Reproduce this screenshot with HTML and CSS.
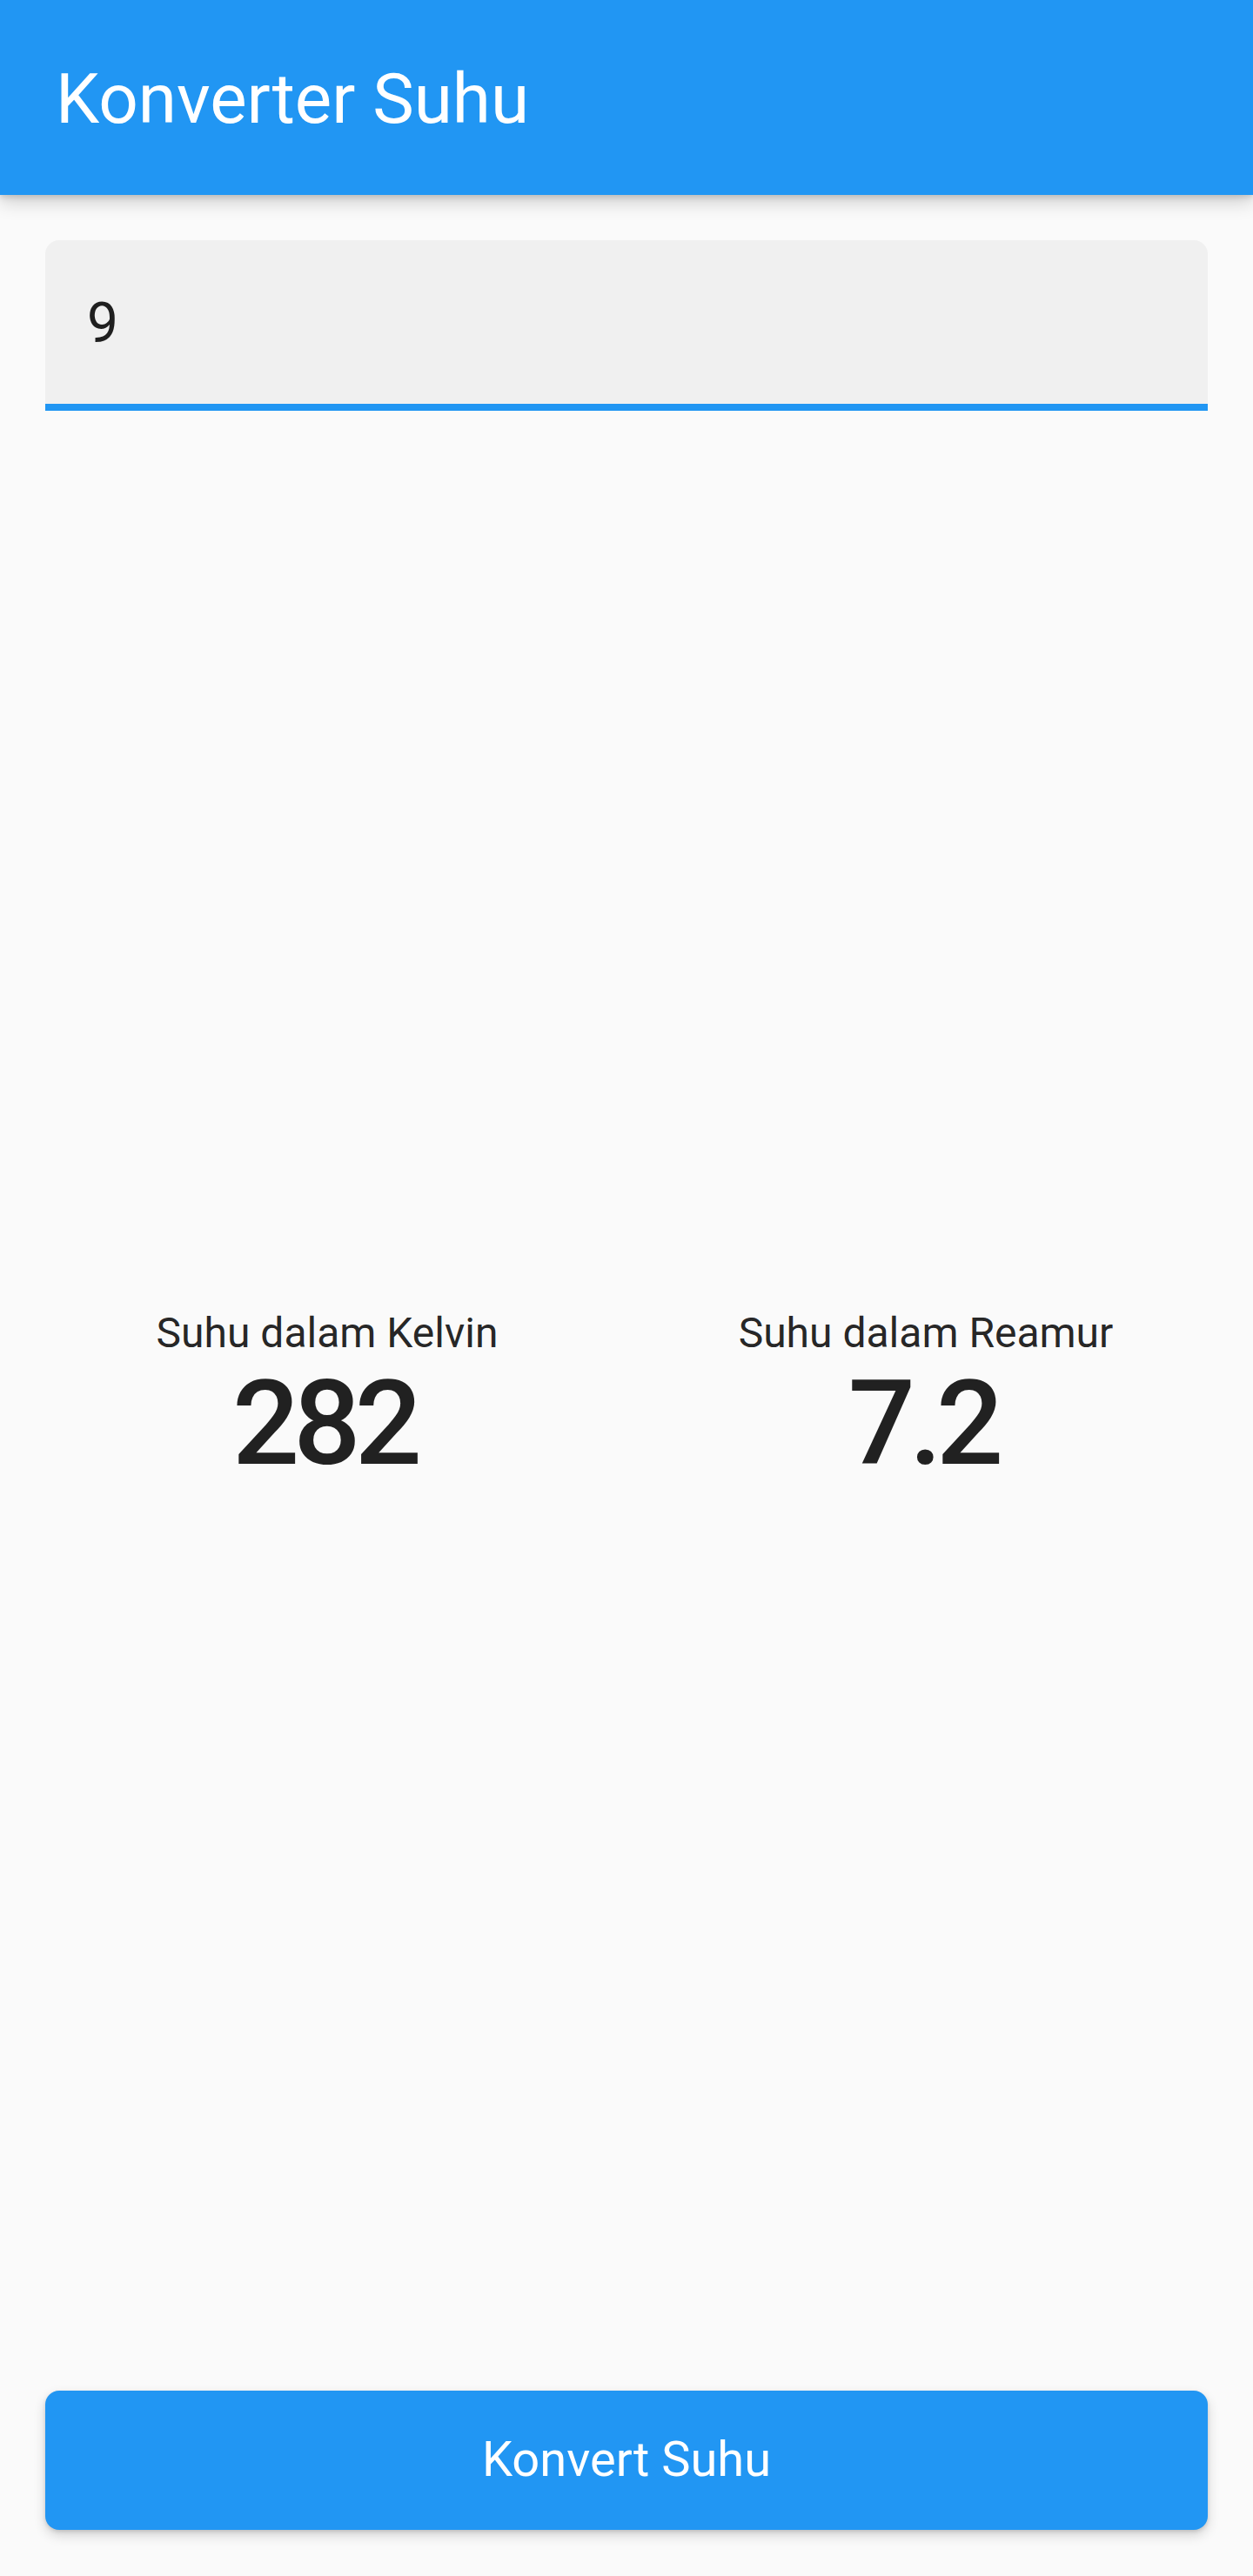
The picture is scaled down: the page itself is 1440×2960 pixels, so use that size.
FILE: index.html
```html
<!DOCTYPE html>
<html lang="id">
<head>
<meta charset="utf-8">
<title>Konverter Suhu</title>
<link rel="stylesheet" href="styles.css">
</head>
<body>
<div class="app">
  <header class="appbar">
    <h1 class="appbar-title">Konverter Suhu</h1>
  </header>
  <main class="content">
    <div class="field">
      <span class="field-value">9</span>
    </div>
    <section class="results">
      <div class="result">
        <div class="result-label">Suhu dalam Kelvin</div>
        <div class="result-value">282</div>
      </div>
      <div class="result">
        <div class="result-label">Suhu dalam Reamur</div>
        <div class="result-value">7.2</div>
      </div>
    </section>
    <button class="convert-btn" type="button">Konvert Suhu</button>
  </main>
</div>
</body>
</html>
```

FILE: styles.css
```css
html, body {
  margin: 0;
  padding: 0;
}
body {
  background: #fafafa;
  font-family: Roboto, "Noto Sans", "Liberation Sans", sans-serif;
  color: rgba(0, 0, 0, 0.87);
}
.app {
  display: flex;
  flex-direction: column;
  height: 2960px;
}
.appbar {
  position: relative;
  z-index: 2;
  height: 224px;
  box-sizing: border-box;
  padding: 6px 64px 0;
  background: #2196f3;
  display: flex;
  align-items: center;
  box-shadow: 0 8px 20px rgba(0, 0, 0, 0.18), 0 3px 6px rgba(0, 0, 0, 0.12);
}
.appbar-title {
  margin: 0;
  font-size: 80px;
  font-weight: 400;
  line-height: 1.172;
  color: #ffffff;
}
.content {
  flex: 1;
  display: flex;
  flex-direction: column;
  padding: 52px 52px 53px;
}
.field {
  height: 196px;
  box-sizing: border-box;
  padding: 58px 48px 0;
  background: #f0f0f0;
  border-radius: 16px 16px 0 0;
  border-bottom: 8px solid #2196f3;
}
.field-value {
  font-size: 64px;
  line-height: 1.172;
  display: block;
}
.results {
  flex: 1;
  display: grid;
  grid-template-columns: 1fr 1fr;
  column-gap: 40px;
  align-content: center;
}
.result {
  display: flex;
  flex-direction: column;
  align-items: center;
}
.result-label {
  font-size: 48px;
  line-height: 1.172;
}
.result-value {
  font-size: 136px;
  font-weight: 500;
  letter-spacing: -7px;
  text-indent: -7px;
  line-height: 1.172;
  margin-top: -4px;
}
.convert-btn {
  height: 160px;
  width: 100%;
  border: none;
  border-radius: 16px;
  background: #2196f3;
  color: #ffffff;
  font-family: Roboto, "Noto Sans", "Liberation Sans", sans-serif;
  font-size: 56px;
  font-weight: 400;
  line-height: 1.172;
  padding: 0;
  box-shadow: 0 6px 14px rgba(0, 0, 0, 0.16), 0 2px 4px rgba(0, 0, 0, 0.12);
}
```
